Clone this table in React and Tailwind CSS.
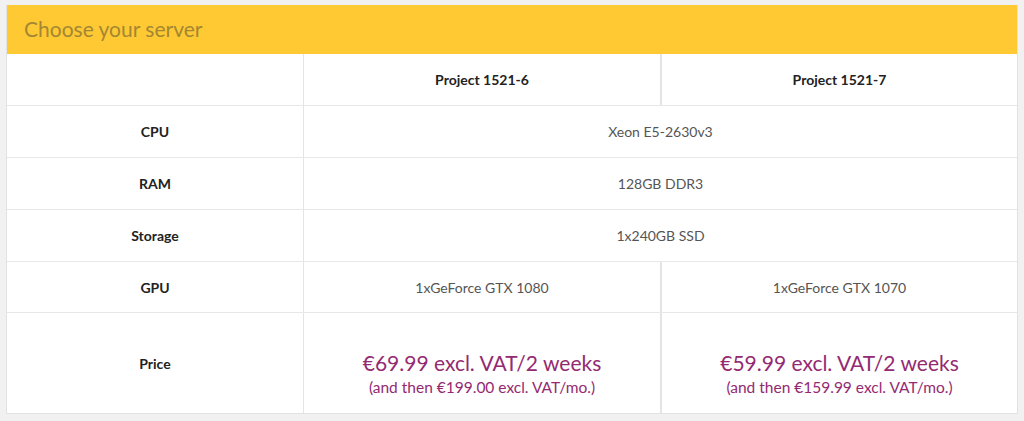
const rows = [
  { label: "CPU", value: "Xeon E5-2630v3" },
  { label: "RAM", value: "128GB DDR3" },
  { label: "Storage", value: "1x240GB SSD" },
];

const plans = [
  { name: "Project 1521-6", gpu: "1xGeForce GTX 1080", price: "€69.99", later: "€199.00" },
  { name: "Project 1521-7", gpu: "1xGeForce GTX 1070", price: "€59.99", later: "€159.99" },
];

const App = () => {
  return (
    <div className="min-h-[421px] bg-[#f1f1f1] pt-[5px] pl-[6px]" style={{ fontFamily: "Lato, 'Open Sans', sans-serif" }}>
      <div className="w-[1012px] border-x border-b border-[#e2e2e2] bg-white">
        <div className="h-[49px] bg-[#ffc933] flex items-center pl-[17px] pb-[2px]">
          <h2 className="text-[21px] leading-none text-[#a38733]">Choose your server</h2>
        </div>

        <div className="flex h-[52px] border-b border-[#e8e8e8]">
          <div className="w-[297px] border-r border-[#e4e4e4]"></div>
          {plans.map((p, i) => (
            <div key={p.name} className={i === 0 ? "w-[358px] border-r-2 border-[#e4e4e4] flex items-center justify-center text-[14px] font-bold text-[#222]" : "flex-1 flex items-center justify-center text-[14px] font-bold text-[#222]"}>
              {p.name}
            </div>
          ))}
        </div>

        {rows.map(r => (
          <div key={r.label} className="flex h-[52px] border-b border-[#e8e8e8]">
            <div className="w-[297px] border-r border-[#e4e4e4] flex items-center justify-center text-[14px] font-bold text-[#222]">{r.label}</div>
            <div className="flex-1 flex items-center justify-center text-[14px] text-[#555]">{r.value}</div>
          </div>
        ))}

        <div className="flex h-[51px] border-b border-[#e8e8e8]">
          <div className="w-[297px] border-r border-[#e4e4e4] flex items-center justify-center text-[14px] font-bold text-[#222]">GPU</div>
          {plans.map((p, i) => (
            <div key={p.name} className={i === 0 ? "w-[358px] border-r-2 border-[#e4e4e4] flex items-center justify-center text-[14px] text-[#555]" : "flex-1 flex items-center justify-center text-[14px] text-[#555]"}>
              {p.gpu}
            </div>
          ))}
        </div>

        <div className="flex h-[100px]">
          <div className="w-[297px] border-r border-[#e4e4e4] flex items-center justify-center text-[14px] font-bold text-[#222]">Price</div>
          {plans.map((p, i) => (
            <div key={p.name} className={i === 0 ? "w-[358px] border-r-2 border-[#e4e4e4] flex flex-col items-center justify-center pt-[22px] text-[#932a72]" : "flex-1 flex flex-col items-center justify-center pt-[22px] text-[#932a72]"}>
              <p className="text-[21px] leading-[26px]">{p.price} excl. VAT/2 weeks</p>
              <p className="text-[15.5px] leading-[22px]">(and then {p.later} excl. VAT/mo.)</p>
            </div>
          ))}
        </div>
      </div>
    </div>
  );
};

export default App;
